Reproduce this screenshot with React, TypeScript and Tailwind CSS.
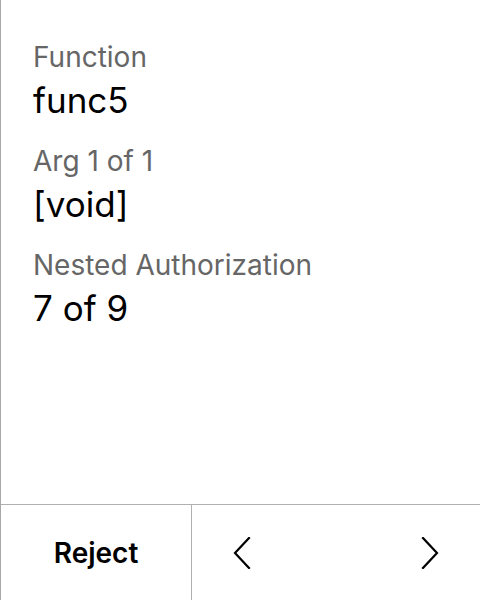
import React from "react";

const fields = [
  { label: "Function", value: "func5" },
  { label: "Arg 1 of 1", value: "[void]" },
  { label: "Nested Authorization", value: "7 of 9" },
];

function Chevron({ dir }: { dir: "left" | "right" }) {
  return (
    <svg width="20" height="32" viewBox="0 0 20 32" fill="none">
      <path
        d={dir === "left" ? "M17 1 L3 16 L17 31" : "M3 1 L17 16 L3 31"}
        stroke="#000"
        strokeWidth="2.2"
        strokeLinecap="square"
      />
    </svg>
  );
}

export default function App() {
  return (
    <div
      className="w-[480px] h-[600px] bg-white border-l border-[#a8a8a8] flex flex-col"
      style={{ fontFamily: "Inter, 'Noto Sans', sans-serif" }}
    >
      <div className="flex-1 pl-[32px] pt-[39px] flex flex-col gap-[22px]">
        {fields.map((f) => (
          <div key={f.label} className="flex flex-col gap-[4px]">
            <div className="text-[28px] leading-[36px] text-[#666666]">{f.label}</div>
            <div className="text-[35px] leading-[42px] text-black">{f.value}</div>
          </div>
        ))}
      </div>
      <div className="h-[96px] border-t border-[#b0b0b0] flex">
        <button className="w-[191px] border-r border-[#b0b0b0] flex items-center justify-center text-[28px] font-semibold text-black">
          Reject
        </button>
        <div className="flex-1 flex items-center justify-between pl-[40px] pr-[40px]">
          <button className="flex items-center">
            <Chevron dir="left" />
          </button>
          <button className="flex items-center">
            <Chevron dir="right" />
          </button>
        </div>
      </div>
    </div>
  );
}
